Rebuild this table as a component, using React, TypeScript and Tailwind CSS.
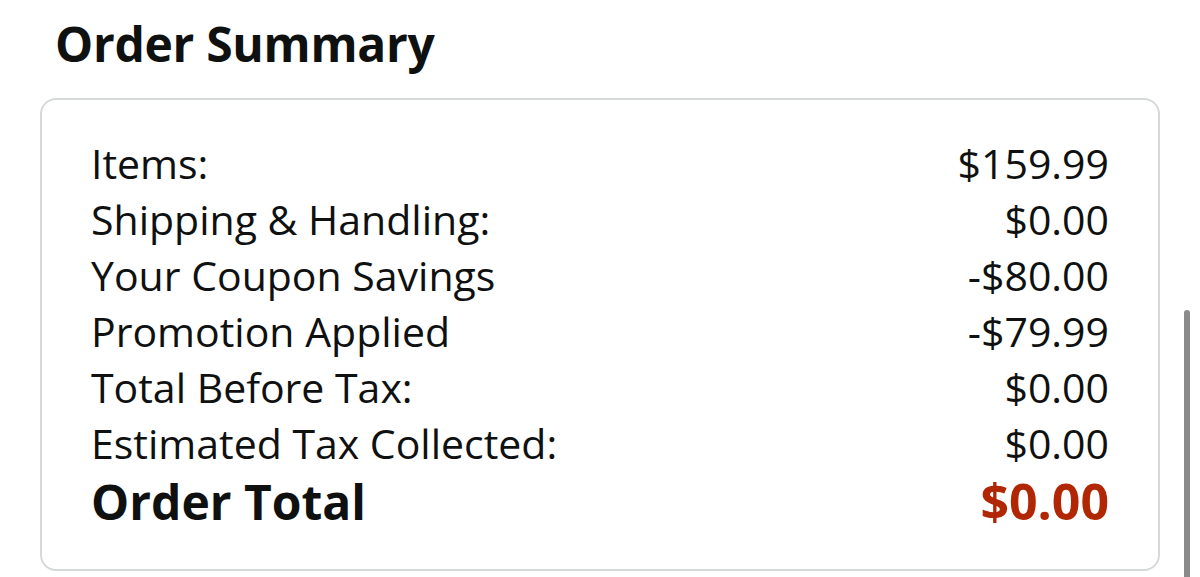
const rows: [string, string][] = [
  ['Items:', '$159.99'],
  ['Shipping & Handling:', '$0.00'],
  ['Your Coupon Savings', '-$80.00'],
  ['Promotion Applied', '-$79.99'],
  ['Total Before Tax:', '$0.00'],
  ['Estimated Tax Collected:', '$0.00'],
]

export default function App() {
  return (
    <div
      className="relative h-[577px] w-[1200px] overflow-hidden bg-white text-[#0f1111]"
      style={{ fontFamily: '"Open Sans", "Noto Sans", sans-serif' }}
    >
      <div className="px-[40px] pt-[12px]">
        <h1 className="ml-[15px] text-[48px] font-bold leading-[64px] tracking-[-0.3px]">
          Order Summary
        </h1>

        <div className="mt-[22px] rounded-[16px] border-2 border-[#d5d9d9] px-[49px] pb-[37px] pt-[35px]">
          {rows.map(([label, value]) => (
            <div key={label} className="flex items-baseline justify-between text-[41px] leading-[56px]">
              <span>{label}</span>
              <span>{value}</span>
            </div>
          ))}
          <div className="flex items-baseline justify-between text-[48px] font-bold leading-[61px]">
            <span>Order Total</span>
            <span className="text-[50px] text-[#b12704]">$0.00</span>
          </div>
        </div>
      </div>

      {/* scroll indicator */}
      <div className="absolute right-[10px] top-[310px] h-[300px] w-[6px] rounded-full bg-[#8a8a8a]" />
    </div>
  )
}
